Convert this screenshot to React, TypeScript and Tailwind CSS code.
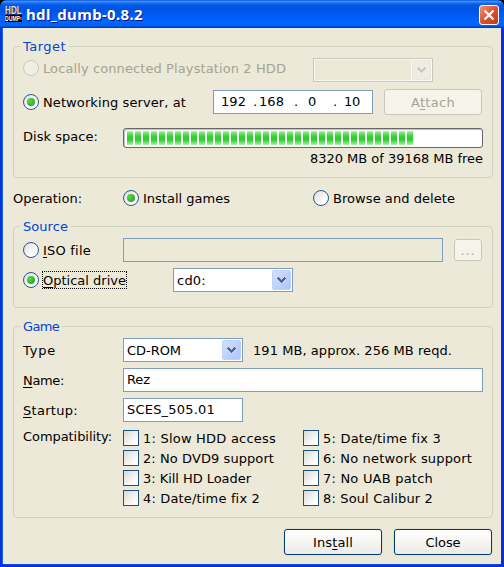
import { useLayoutEffect, useRef, useState, type ReactNode } from "react";

/** Single line of text tracked so that it fills `width` pixels. */
function T({
  width,
  raised,
  className = "",
  children,
}: {
  width: number;
  raised?: boolean;
  className?: string;
  children: ReactNode;
}) {
  const ref = useRef<HTMLSpanElement>(null);
  const [spacing, setSpacing] = useState(0);
  useLayoutEffect(() => {
    const el = ref.current;
    if (!el) return;
    el.style.letterSpacing = "0px";
    const natural = el.getBoundingClientRect().width;
    const value = (width - natural) / ((el.textContent ?? "").length || 1);
    el.style.letterSpacing = value + "px";
    setSpacing(value);
  }, [width]);
  return (
    <span
      ref={ref}
      className={`block w-max shrink-0 whitespace-pre leading-4 ${raised ? "" : "translate-y-px"} ${className}`}
      style={{ letterSpacing: spacing }}
    >
      {children}
    </span>
  );
}

const U = ({ children }: { children: ReactNode }) => (
  <span className="underline decoration-1 underline-offset-2">{children}</span>
);

function Radio({ checked, disabled }: { checked?: boolean; disabled?: boolean }) {
  return (
    <span
      className={`flex size-4 shrink-0 items-center justify-center rounded-full border ${
        disabled ? "border-[#cac8bb] bg-[#f0efe4]" : "border-[#29568b] bg-linear-to-br from-[#dcdcd7] to-white to-70%"
      }`}
    >
      {checked && <span className="size-2 rounded-full bg-radial-[at_35%_35%] from-[#58d64e] to-[#1d9a1c]" />}
    </span>
  );
}

function Option({ text, width, checked, disabled }: { text: ReactNode; width: number; checked?: boolean; disabled?: boolean }) {
  return (
    <label className={`flex h-4 items-center gap-1 ${disabled ? "text-[#a5a392]" : ""}`}>
      <Radio checked={checked} disabled={disabled} />
      <T width={width}>{text}</T>
    </label>
  );
}

function Combo({ text, width, disabled }: { text?: string; width?: number; disabled?: boolean }) {
  return (
    <div
      className={`flex h-6 w-[120px] items-center justify-between border ${
        disabled ? "border-[#c9c7ba] bg-[#ebe8d7] pr-px shadow-[inset_0_0_0_1px_#f7f6f0]" : "border-[#7f9db9] bg-white pr-px"
      } pl-[3px]`}
    >
      {text && width ? <T width={width}>{text}</T> : <span />}
      <span
        className={`flex h-5 w-[19px] items-center justify-center rounded-[2px] border ${
          disabled
            ? "border-[#e8e6dc] bg-[#efede3] shadow-[0_0_0_1px_#fbfaf6]"
            : "border-[#c0d0fa] bg-linear-to-br from-[#d3e0fe] to-[#adc5f8]"
        }`}
      >
        <svg width="9" height="6" viewBox="0 0 9 6" shapeRendering="crispEdges">
          <path
            d="M1 0h1v1h1v1h1v1h1v-1h1v-1h1v-1h1v1h1v1h-1v1h-1v1h-1v1h-1v1h-1v-1h-1v-1h-1v-1h-1v-1h-1v-1h1z"
            fill={disabled ? "#c9c7ba" : "#4d6185"}
          />
        </svg>
      </span>
    </div>
  );
}

function Label({ width, className = "", children }: { width: number; className?: string; children: ReactNode }) {
  return (
    <div className={`w-[100px] shrink-0 ${className}`}>
      <T width={width}>{children}</T>
    </div>
  );
}

function Check({ text, width }: { text: string; width: number }) {
  return (
    <label className="flex h-5 items-start gap-1">
      <span className="size-4 shrink-0 border border-[#1c5180] bg-linear-to-br from-[#d9d9d4] to-white to-80%" />
      <T width={width}>{text}</T>
    </label>
  );
}

function Group({ title, width, className, children }: { title: string; width: number; className: string; children: ReactNode }) {
  return (
    <fieldset className={`w-[480px] rounded-[4px] border border-[#d0d0bf] px-[6px] ${className}`}>
      <legend className="h-[17px] px-[3px] text-[#0046d5]">
        <T width={width}>{title}</T>
      </legend>
      <div className="pl-[3px]">{children}</div>
    </fieldset>
  );
}

const field = "flex h-6 items-center border border-[#7f9db9] bg-white pl-[3px]";
const button =
  "flex h-[26px] w-[98px] items-center justify-center rounded-[3px] border border-[#003c74] bg-linear-to-b from-white to-[#ecebe5] shadow-[0_0_0_1px_#e3e0d0]";
const disabledButton =
  "flex items-center justify-center rounded-[3px] border border-[#c9c7ba] bg-[#f5f4ea] text-[#a5a392]";

const leftChecks: [string, number][] = [
  ["1: Slow HDD access", 133],
  ["2: No DVD9 support", 131],
  ["3: Kill HD Loader", 108],
  ["4: Date/time fix 2", 117],
];
const rightChecks: [string, number][] = [
  ["5: Date/time fix 3", 118],
  ["6: No network support", 149],
  ["7: No UAB patch", 110],
  ["8: Soul Calibur 2", 110],
];

export default function App() {
  return (
    <div className="h-[567px] w-[504px] overflow-hidden bg-black font-['DejaVu_Sans',Verdana,sans-serif] text-[13px] text-black">
      <div className="flex h-full flex-col overflow-hidden rounded-t-[7px] bg-[#0831d9]">
        <header className="flex h-7 shrink-0 items-center bg-[linear-gradient(180deg,#0a50d8_0%,#3c92ff_5%,#1a6ff0_11%,#0058e6_18%,#0054e3_35%,#005cf4_55%,#0066ff_80%,#0062f8_90%,#0046d0_97%,#0038b8_100%)] pl-[5px] pr-[5px] pt-[2px]">
          <div className="-mt-[2px] flex w-[17px] flex-col font-['Liberation_Sans',sans-serif] font-bold">
            <span className="block w-max origin-left scale-x-[0.74] text-[11px] leading-[9px] text-[#dedede] [text-shadow:1px_1px_0_#222]">
              HDL
            </span>
            <div className="flex h-[7px] items-center justify-between bg-black">
              <span className="block w-[15px] origin-left scale-x-[0.64] text-[8px] leading-[7px] text-white">DUMP</span>
              <span className="h-[3px] w-[2px] bg-[#e0182c]" />
            </div>
          </div>
          <T
            width={117}
            raised
            className="-mt-[2px] ml-1 font-['Noto_Sans','Open_Sans',sans-serif] text-[15px] font-bold text-white [text-shadow:1px_1px_0_#0a1883]"
          >
            hdl_dumb-0.8.2
          </T>
          <button className="ml-auto flex size-5 items-center justify-center rounded-[3px] border border-white bg-linear-to-br from-[#eb8f72] via-[#e0512a] to-[#c43a12]">
            <svg width="12" height="12" viewBox="0 0 12 12">
              <path d="M1.5 1.5l9 9M10.5 1.5l-9 9" stroke="#fff" strokeWidth="2.2" />
            </svg>
          </button>
        </header>

        <main className="mb-[3px] ml-[3px] mr-[3px] min-h-0 flex-1 bg-[#ece9d8] pl-[10px] pt-[10px] shadow-[-1px_0_0_#166aee,0_1px_0_#0a46d8]">
          <Group title="Target" width={43} className="h-[140px]">
            <div className="flex h-[30px] items-center">
              <div className="-mt-1 w-[290px]">
                <Option text="Locally connected Playstation 2 HDD" width={243} disabled />
              </div>
              <Combo disabled />
            </div>
            <div className="mt-[2px] flex h-[30px] items-center">
              <div className="w-[190px]">
                <Option text="Networking server, at" width={143} checked />
              </div>
              <div className={`${field} w-40 pl-[7px]`}>
                <T raised width={25}>192</T>
                <T raised width={5} className="ml-[7px]">.</T>
                <T raised width={25} className="ml-px">168</T>
                <T raised width={5} className="ml-[10px]">.</T>
                <T raised width={8} className="ml-[9px]">0</T>
                <T raised width={5} className="ml-[17px]">.</T>
                <T raised width={16} className="ml-[6px]">10</T>
              </div>
              <button className={`${disabledButton} ml-[11px] h-[26px] w-[98px]`}>
                <T width={44}>
                  A<U>t</U>tach
                </T>
              </button>
            </div>
            <div className="mt-[11px] flex h-5">
              <Label width={75}>Disk space:</Label>
              <div className="flex h-5 w-[360px] gap-[2px] rounded-[3px] border border-[#686868] bg-white px-[3px] py-[2px] shadow-[inset_1px_1px_1px_#bebebe]">
                {Array.from({ length: 36 }, (_, i) => (
                  <span
                    key={i}
                    className="h-[14px] w-[6px] bg-[linear-gradient(180deg,#b4efb4_0%,#5fdc5f_22%,#2dd22d_42%,#2dd22d_62%,#6adf6a_82%,#b4efb4_100%)]"
                  />
                ))}
              </div>
            </div>
            <div className="mt-[3px] flex w-[460px] justify-end">
              <T raised width={173}>8320 MB of 39168 MB free</T>
            </div>
          </Group>

          <div className="mt-3 flex h-4 items-center">
            <Label width={69} className="mr-[10px]">Operation:</Label>
            <div className="w-[190px]">
              <Option text="Install games" width={87} checked />
            </div>
            <Option text="Browse and delete" width={122} />
          </div>

          <Group title="Source" width={45} className="mt-3 h-[90px]">
            <div className="mt-[3px] flex h-6 items-center">
              <div className="w-[100px]">
                <Option text={<><U>I</U>SO file</>} width={48} />
              </div>
              <div className="h-6 w-[320px] border border-[#7f9db9]" />
              <button className={`${disabledButton} ml-[11px] h-[22px] w-7`}>
                <T width={15}>...</T>
              </button>
            </div>
            <div className="mt-[6px] flex h-6 items-center">
              <div className="flex w-[150px] items-center gap-[3px]">
                <Radio checked />
                <span className="border border-dotted border-black">
                  <T width={83}>
                    <U>O</U>ptical drive
                  </T>
                </span>
              </div>
              <Combo text="cd0:" width={29} />
            </div>
          </Group>

          <Group title="Game" width={36} className="mt-[10px] h-[200px]">
            <div className="mt-[3px] flex h-6 items-center">
              <Label width={33}>Type</Label>
              <Combo text="CD-ROM" width={54} />
              <T width={199} className="ml-[10px]">191 MB, approx. 256 MB reqd.</T>
            </div>
            <div className="mt-[6px] flex h-6 items-center">
              <Label width={41}><U>N</U>ame:</Label>
              <div className={`${field} w-[360px]`}>
                <T raised width={23}>Rez</T>
              </div>
            </div>
            <div className="mt-[6px] flex h-6 items-center">
              <Label width={55}><U>S</U>tartup:</Label>
              <div className={`${field} w-[120px]`}>
                <T raised width={88}>SCES_505.01</T>
              </div>
            </div>
            <div className="mt-2 flex">
              <Label width={89} className="-mt-[2px]">Compatibility:</Label>
              <div className="w-[180px]">
                {leftChecks.map(([text, width]) => (
                  <Check key={text} text={text} width={width} />
                ))}
              </div>
              <div>
                {rightChecks.map(([text, width]) => (
                  <Check key={text} text={text} width={width} />
                ))}
              </div>
            </div>
          </Group>

          <footer className="mt-[11px] flex w-[479px] justify-end gap-3">
            <button className={button}>
              <T width={40}>
                Ins<U>t</U>all
              </T>
            </button>
            <button className={button}>
              <T width={35}>Close</T>
            </button>
          </footer>
        </main>
      </div>
    </div>
  );
}
